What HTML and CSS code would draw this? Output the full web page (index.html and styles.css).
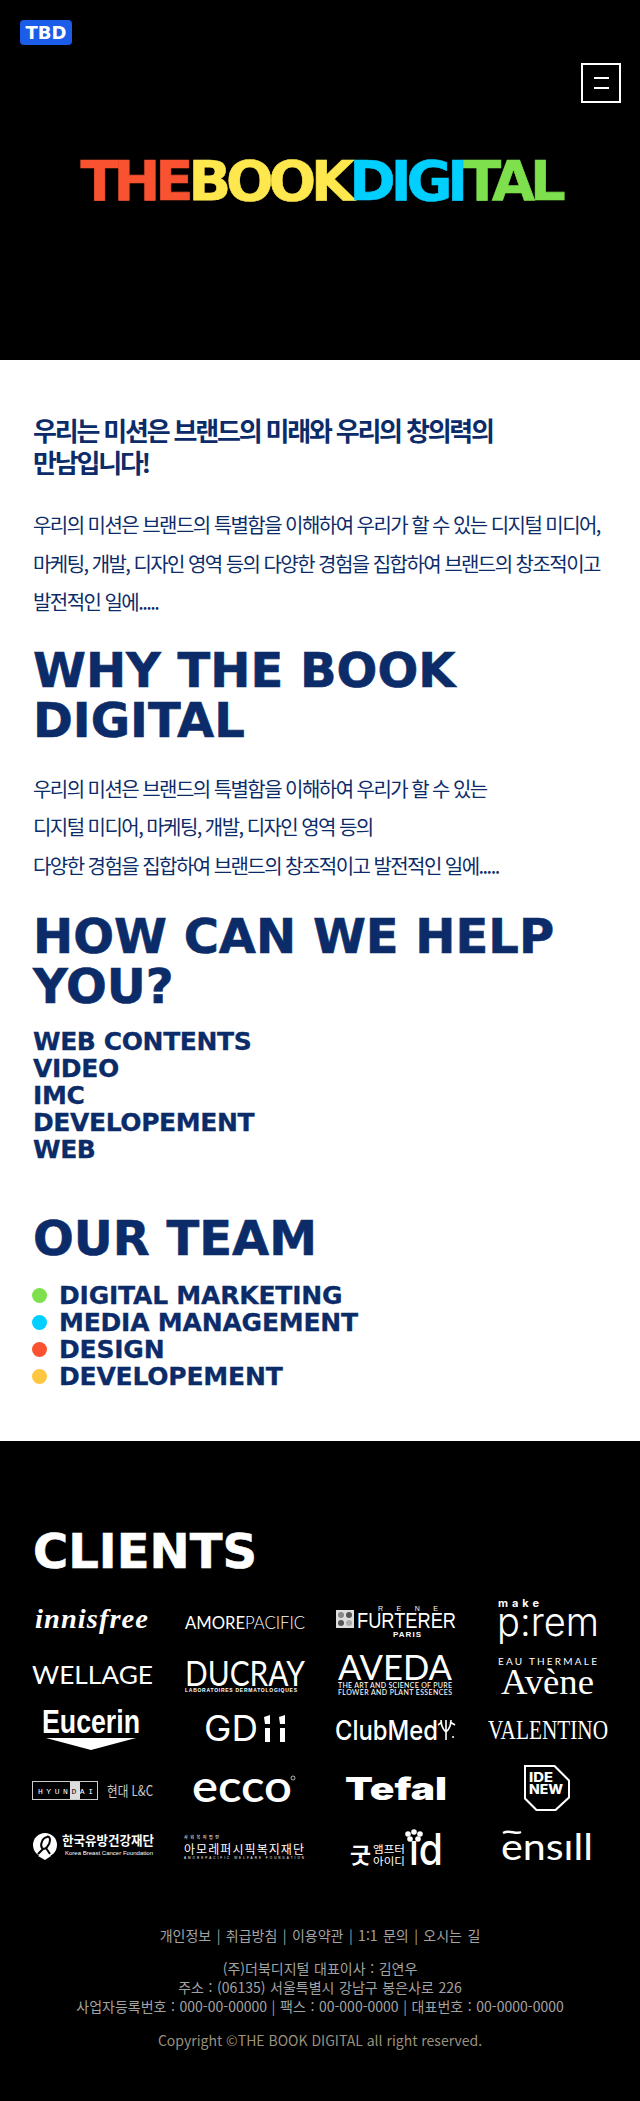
FILE: index.html
```html
<!DOCTYPE html>
<html lang="ko">
<head>
<meta charset="utf-8">
<title>THE BOOK DIGITAL</title>
<link rel="stylesheet" href="styles.css">
</head>
<body>
<header class="hero">
  <a class="badge">TBD</a>
  <button class="menu" aria-label="menu"><span></span><span></span></button>
  <h1 class="wordmark"><span class="c-red">THE</span><span class="c-yellow">BOOK</span><span class="c-cyan">DIGI</span><span class="c-green">TAL</span></h1>
</header>
<main class="content">
  <h2 class="lead">우리는 미션은 브랜드의 미래와 우리의 창의력의<br>만남입니다!</h2>
  <p class="copy copy-first">우리의 미션은 브랜드의 특별함을 이해하여 우리가 할 수 있는 디지털 미디어,<br>마케팅, 개발, 디자인 영역 등의 다양한 경험을 집합하여 브랜드의 창조적이고<br>발전적인 일에.....</p>
  <h2 class="title title-why">WHY THE BOOK DIGITAL</h2>
  <p class="copy copy-why">우리의 미션은 브랜드의 특별함을 이해하여 우리가 할 수 있는<br>디지털 미디어, 마케팅, 개발, 디자인 영역 등의<br>다양한 경험을 집합하여 브랜드의 창조적이고 발전적인 일에.....</p>
  <h2 class="title title-help">HOW CAN WE HELP YOU?</h2>
  <ul class="services">
    <li>WEB CONTENTS</li>
    <li>VIDEO</li>
    <li>IMC</li>
    <li>DEVELOPEMENT</li>
    <li>WEB</li>
  </ul>
  <h2 class="title title-team">OUR TEAM</h2>
  <ul class="team">
    <li class="dot-green">DIGITAL MARKETING</li>
    <li class="dot-cyan">MEDIA MANAGEMENT</li>
    <li class="dot-red">DESIGN</li>
    <li class="dot-amber">DEVELOPEMENT</li>
  </ul>
</main>
<footer class="footer">
  <h2 class="title clients-title">CLIENTS</h2>
  <div class="clients">
    <svg width="152" height="54" viewBox="0 0 152 54"><g transform="translate(-16 -1594)"><text class="lg-serif-i" x="35" y="1628" textLength="114" lengthAdjust="spacingAndGlyphs">innisfree</text></g></svg>
    <svg width="152" height="54" viewBox="0 0 152 54"><g transform="translate(-168 -1594)"><text class="lg-amore" x="185" y="1629" textLength="120" lengthAdjust="spacingAndGlyphs">AMORE<tspan class="lg-thin">PACIFIC</tspan></text></g></svg>
    <svg width="152" height="54" viewBox="0 0 152 54"><g transform="translate(-320 -1594)">
      <rect x="336" y="1610" width="18" height="18" fill="#ddd"/>
      <circle cx="341" cy="1615" r="3" fill="#888"/><circle cx="349" cy="1615" r="3" fill="#555"/><circle cx="341" cy="1623" r="3" fill="#555"/><circle cx="349" cy="1623" r="3" fill="#aaa"/>
      <text class="lg-sans-s" x="378" y="1611" textLength="60">RENE</text>
      <text class="lg-furt" x="357" y="1628" textLength="99" lengthAdjust="spacingAndGlyphs">FURTERER</text>
      <text class="lg-sans-b" x="393" y="1637" textLength="28">PARIS</text>
    </g></svg>
    <svg width="152" height="54" viewBox="0 0 152 54"><g transform="translate(-472 -1594)">
      <text class="lg-make" x="498" y="1607" textLength="41">make</text>
      <text class="lg-prem" x="497" y="1636" textLength="102" lengthAdjust="spacingAndGlyphs">p:rem</text>
    </g></svg>

    <svg width="152" height="54" viewBox="0 0 152 54"><g transform="translate(-16 -1648)"><text class="lg-well" x="32" y="1684" textLength="121" lengthAdjust="spacingAndGlyphs">WELLAGE</text></g></svg>
    <svg width="152" height="54" viewBox="0 0 152 54"><g transform="translate(-168 -1648)">
      <text class="lg-ducray" x="185" y="1686" textLength="120" lengthAdjust="spacingAndGlyphs">DUCRAY</text>
      <text class="lg-tiny-b" x="185" y="1692" textLength="112">LABORATOIRES DERMATOLOGIQUES</text>
    </g></svg>
    <svg width="152" height="54" viewBox="0 0 152 54"><g transform="translate(-320 -1648)">
      <text class="lg-aveda" x="338" y="1680" textLength="114" lengthAdjust="spacingAndGlyphs">AVEDA</text>
      <text class="lg-aveda-s" x="338" y="1688" textLength="114">THE ART AND SCIENCE OF PURE</text>
      <text class="lg-aveda-s" x="338" y="1695" textLength="114">FLOWER AND PLANT ESSENCES</text>
    </g></svg>
    <svg width="152" height="54" viewBox="0 0 152 54"><g transform="translate(-472 -1648)">
      <text class="lg-eau" x="498" y="1665" textLength="99">EAU THERMALE</text>
      <text class="lg-avene" x="501" y="1694" textLength="93" lengthAdjust="spacingAndGlyphs">Avène</text>
    </g></svg>

    <svg width="152" height="54" viewBox="0 0 152 54"><g transform="translate(-16 -1702)">
      <text class="lg-euc" x="42" y="1733" textLength="98" lengthAdjust="spacingAndGlyphs">Eucerin</text>
      <path d="M46 1738H136L91 1750Z" fill="#fff"/>
    </g></svg>
    <svg width="152" height="54" viewBox="0 0 152 54"><g transform="translate(-168 -1702)">
      <text class="lg-gd" x="204" y="1741" textLength="54" lengthAdjust="spacingAndGlyphs">GD</text>
      <path d="M264 1717L270 1715V1724H265ZM279 1717L285 1715V1724H280ZM265 1728H270V1742H265ZM280 1728H285V1742H280Z" fill="#fff"/>
    </g></svg>
    <svg width="152" height="54" viewBox="0 0 152 54"><g transform="translate(-320 -1702)">
      <text class="lg-club" x="335" y="1740" textLength="103" lengthAdjust="spacingAndGlyphs">ClubMed</text>
      <path d="M446 1720V1740M441 1720C441 1728 445 1731 446 1732C447 1731 451 1728 451 1720M442 1722L438 1725M450 1722L455 1725" fill="none" stroke="#fff" stroke-width="1.6"/>
      <circle cx="453" cy="1737" r="1" fill="#fff"/>
    </g></svg>
    <svg width="152" height="54" viewBox="0 0 152 54"><g transform="translate(-472 -1702)"><text class="lg-val" x="488" y="1739" textLength="120" lengthAdjust="spacingAndGlyphs">VALENTINO</text></g></svg>

    <svg width="152" height="64" viewBox="0 0 152 64"><g transform="translate(-16 -1756)">
      <rect x="32.5" y="1781.5" width="65" height="18" fill="none" stroke="#ccc"/>
      <rect x="70" y="1782" width="10" height="17" fill="#ddd"/>
      <text class="lg-hy" x="38" y="1794" textLength="55">HYUN<tspan class="lg-hy-d">D</tspan>AI</text>
      <text class="lg-hd" x="107" y="1796" textLength="46" lengthAdjust="spacingAndGlyphs">현대 L&amp;C</text>
    </g></svg>
    <svg width="152" height="64" viewBox="0 0 152 64"><g transform="translate(-168 -1756)">
      <text class="lg-ecco" x="192" y="1802" textLength="100" lengthAdjust="spacingAndGlyphs">ecco</text>
      <circle cx="293" cy="1778" r="2" fill="none" stroke="#fff" stroke-width=".7"/>
    </g></svg>
    <svg width="152" height="64" viewBox="0 0 152 64"><g transform="translate(-320 -1756)"><text class="lg-tefal" x="345" y="1800" textLength="102" lengthAdjust="spacingAndGlyphs">Tefal</text></g></svg>
    <svg width="152" height="64" viewBox="0 0 152 64"><g transform="translate(-472 -1756)">
      <path d="M524 1765H555L570 1780V1798L556 1811H536L524 1799Z" fill="#fff"/>
      <path d="M526 1767H554L568 1781V1797L555 1809H537L526 1798Z" fill="#000"/>
      <text class="lg-ide" x="529" y="1782" textLength="24" lengthAdjust="spacingAndGlyphs">IDE</text>
      <text class="lg-ide" x="529" y="1794" textLength="34" lengthAdjust="spacingAndGlyphs">NEW</text>
    </g></svg>

    <svg width="152" height="52" viewBox="0 0 152 52"><g transform="translate(-16 -1820)">
      <circle cx="45" cy="1845" r="12" fill="#fff"/>
      <path d="M47 1837C42 1838 40 1845 42 1848C45 1851 50 1845 50 1840C50 1837 48 1836 47 1837ZM43 1849L38 1854M46 1848L50 1854" fill="none" stroke="#000" stroke-width="2"/>
      <path d="M38 1856L45 1852L51 1856L45 1860Z" fill="#fff"/>
      <text class="lg-kbc" x="62" y="1845" textLength="92" lengthAdjust="spacingAndGlyphs">한국유방건강재단</text>
      <text class="lg-kbc-s" x="65" y="1855" textLength="88" lengthAdjust="spacingAndGlyphs">Korea Breast Cancer Foundation</text>
    </g></svg>
    <svg width="152" height="52" viewBox="0 0 152 52"><g transform="translate(-168 -1820)">
      <text class="lg-ap-t" x="184" y="1838.500" textLength="35">사회복지법인</text>
      <text class="lg-ap" x="184" y="1853.500" textLength="120">아모레퍼시픽복지재단</text>
      <text class="lg-ap-s" x="184" y="1858.500" textLength="120">AMOREPACIFIC WELFARE FOUNDATION</text>
    </g></svg>
    <svg width="152" height="52" viewBox="0 0 152 52"><g transform="translate(-320 -1820)">
      <text class="lg-got" x="350" y="1863" textLength="21" lengthAdjust="spacingAndGlyphs">굿</text>
      <text class="lg-mp" x="373" y="1853" textLength="32" lengthAdjust="spacingAndGlyphs">앰프터</text>
      <text class="lg-mp" x="373" y="1865" textLength="32" lengthAdjust="spacingAndGlyphs">아이디</text>
      <text class="lg-id" x="409" y="1865" textLength="34" lengthAdjust="spacingAndGlyphs">ıd</text>
      <circle cx="414" cy="1832" r="2.800" fill="#fff"/><circle cx="408" cy="1834" r="2.800" fill="#fff"/><circle cx="420" cy="1834" r="2.800" fill="#fff"/><circle cx="410" cy="1839" r="2.800" fill="#fff"/><circle cx="418" cy="1839" r="2.800" fill="#fff"/>
    </g></svg>
    <svg width="152" height="52" viewBox="0 0 152 52"><g transform="translate(-472 -1820)">
      <path d="M503 1833C510 1829 515 1835 521 1832" fill="none" stroke="#fff" stroke-width="2.4"/>
      <text class="lg-ensill" x="501" y="1860" textLength="92" lengthAdjust="spacingAndGlyphs">ensıll</text>
    </g></svg>
  </div>
  <nav class="links">개인정보 | 취급방침 | 이용약관 | 1:1 문의 | 오시는 길</nav>
  <address class="info">(주)더북디지털 대표이사 : 김연우<br>주소 : (06135) 서울특별시 강남구 봉은사로 226<br>사업자등록번호 : 000-00-00000 | 팩스 : 00-000-0000 | 대표번호 : 00-0000-0000</address>
  <p class="copyright">Copyright ©THE BOOK DIGITAL all right reserved.</p>
</footer>
</body>
</html>
```
FILE: styles.css
```css
* { box-sizing: border-box; margin: 0; padding: 0; }
html, body { background: #000; }
body { font-family: "Noto Sans CJK KR", "Noto Sans", sans-serif; color: #0c2c69; }

.hero { height: 360px; background: #000; padding: 20px 19px 0 20px; display: flex; flex-direction: column; align-items: flex-start; }
.badge { width: 52px; height: 25px; background: #1b5ce8; border-radius: 4px; color: #fff; font: 700 18px/25px "DejaVu Sans", sans-serif; text-align: center; }
.menu { align-self: flex-end; margin-top: 18px; width: 40px; height: 40px; border: 2px solid #fff; background: none; display: flex; flex-direction: column; align-items: center; justify-content: center; gap: 8px; }
.menu span { display: block; width: 15px; height: 2px; background: #fff; }
.wordmark { align-self: center; margin-top: 44px; font: 700 56px/68px "DejaVu Sans", sans-serif; letter-spacing: -5.1px; white-space: nowrap; -webkit-text-stroke: .6px; }
.c-red { color: #f95230; } .c-yellow { color: #ffe84d; } .c-cyan { color: #00cfff; } .c-green { color: #7de04c; }

.content { background: #fff; height: 1081px; padding: 54px 32px 0 33px; }
.lead { font-size: 26px; line-height: 32px; font-weight: 700; letter-spacing: -2.2px; }
.copy { font-size: 20px; line-height: 38.500px; font-weight: 400; letter-spacing: -1.55px; white-space: nowrap; }
.copy-first { margin-top: 28px; }
.title { font: 700 48px/50px "DejaVu Sans", sans-serif; color: #0c2c69; -webkit-text-stroke: .6px; }
.title-why { margin-top: 23px; }
.copy-why { margin-top: 25px; }
.title-help { margin-top: 26px; }
.services { list-style: none; margin-top: 17px; font: 700 25px/27px "DejaVu Sans", sans-serif; letter-spacing: -.4px; -webkit-text-stroke: .3px; }
.title-team { margin-top: 50px; }
.team { list-style: none; margin-top: 19px; font: 700 25px/27px "DejaVu Sans", sans-serif; letter-spacing: -.2px; -webkit-text-stroke: .3px; }
.team li { display: flex; align-items: center; gap: 12px; }
.team li::before { content: ""; width: 15px; height: 15px; border-radius: 50%; margin-left: -1px; }
.dot-green::before { background: #7de04c; }
.dot-cyan::before { background: #00cfff; }
.dot-red::before { background: #f95230; }
.dot-amber::before { background: #ffc640; }

.footer { background: #000; height: 660px; padding-top: 85px; text-align: center; }
.clients-title { color: #fff; text-align: left; padding-left: 33px; }
.clients { margin: 18px 16px 0; display: grid; grid-template-columns: repeat(4, 152px); grid-template-rows: 54px 54px 54px 64px 52px; }
.clients svg { display: block; overflow: visible; }
.clients text { fill: #fff; font-family: "Inter", sans-serif; }
.clients .lg-serif-i { font: italic 700 27px "Liberation Serif", serif; letter-spacing: 1px; }
.clients .lg-amore { font: 400 17px "Lato", sans-serif; }
.clients .lg-thin { font-weight: 300; }
.clients .lg-sans-s { font: 400 7px "Liberation Sans", sans-serif; }
.clients .lg-furt { font: 400 22px "Liberation Sans", sans-serif; }
.clients .lg-sans-b { font: 700 8px "Liberation Sans", sans-serif; }
.clients .lg-make { font: 700 11px "Inter", sans-serif; }
.clients .lg-prem { font: 300 40px "Inter", sans-serif; }
.clients .lg-well { font: 400 25px "Lato", sans-serif; }
.clients .lg-ducray { font: 400 35px "Lato", sans-serif; }
.clients .lg-tiny-b { font: 700 5px "Liberation Sans", sans-serif; }
.clients .lg-aveda { font: 400 34px "Lato", sans-serif; }
.clients .lg-aveda-s { font: 500 7px "Lato", sans-serif; }
.clients .lg-eau { font: 400 10px "Lato", sans-serif; }
.clients .lg-avene { font: 400 36px "Liberation Serif", serif; }
.clients .lg-euc { font: 700 34px "Liberation Sans", sans-serif; }
.clients .lg-gd { font: 400 36px "Inter", sans-serif; }
.clients .lg-club { font: 500 27px "Inter", sans-serif; }
.clients .lg-val { font: 400 28px "Liberation Serif", serif; }
.clients .lg-hy { font: 400 8px "Liberation Mono", monospace; }
.clients .lg-hy-d { fill: #000; }
.clients .lg-hd { font: 400 14px "Noto Sans CJK KR", sans-serif; fill: #ccc; }
.clients .lg-ecco { font: 600 44px "Lato", sans-serif; }
.clients .lg-tefal { font: 900 31px "Inter", sans-serif; }
.clients .lg-ide { font: 800 13px "Inter", sans-serif; }
.clients .lg-kbc { font: 700 13px "Noto Sans CJK KR", sans-serif; }
.clients .lg-kbc-s { font: 500 6px "Liberation Sans", sans-serif; }
.clients .lg-ap-t { font: 500 4px "Noto Sans CJK KR", sans-serif; }
.clients .lg-ap { font: 400 12px "Noto Sans CJK KR", sans-serif; }
.clients .lg-ap-s { font: 400 3px "Liberation Sans", sans-serif; }
.clients .lg-got { font: 700 22px "Noto Sans CJK KR", sans-serif; }
.clients .lg-mp { font: 400 10px "Noto Sans CJK KR", sans-serif; }
.clients .lg-id { font: 500 44px "Inter", sans-serif; }
.clients .lg-ensill { font: 400 36px "Lato", sans-serif; }

.links { margin-top: 53px; font-size: 14px; line-height: 20px; color: #a3a3a3; word-spacing: 1.5px; }
.info { margin-top: 14px; font-style: normal; font-size: 14px; line-height: 19px; color: #a3a3a3; word-spacing: .7px; }
.copyright { margin-top: 14px; font-size: 14px; line-height: 20px; color: #99917f; }
```
